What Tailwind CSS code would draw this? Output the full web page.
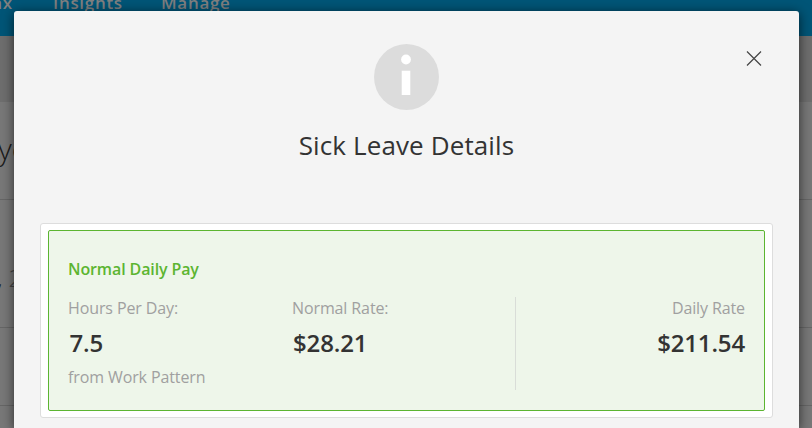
<!DOCTYPE html>
<html lang="en">
<head>
<meta charset="utf-8">
<title>Sick Leave Details</title>
<script src="https://cdn.jsdelivr.net/npm/@tailwindcss/browser@4"></script>
</head>
<body class="relative h-[428px] w-[812px] overflow-hidden bg-[#787878] font-['Open_Sans',sans-serif]">
  <div class="flex h-full flex-col">
    <nav class="flex h-9 shrink-0 bg-[#005577] text-[17px] leading-6 font-semibold tracking-[0.7px] whitespace-nowrap text-[#808080]">
      <span class="-mt-[9px] -ml-[18px] w-[71px]">Tax</span>
      <span class="-mt-[9px] w-[108px]">Insights</span>
      <span class="-mt-[9px]">Manage</span>
    </nav>
    <div class="h-[66px] shrink-0 bg-[#6e6e6e]"></div>
    <div class="h-[98px] shrink-0 border-b border-[#666] pt-[24px] text-[30px] leading-[46px] font-light whitespace-nowrap text-[#1a1a1a]"><span class="-ml-[2px]">ye</span></div>
    <div class="h-32 shrink-0 border-b border-[#666] pt-[61px] text-[24px] leading-[34px] whitespace-nowrap text-[#1a1a1a]"><span class="-ml-[4px] font-semibold">,</span><span class="ml-[6px] font-light text-[#444]">2</span></div>
    <div class="h-[78px] shrink-0 border-b border-[#666]"></div>
  </div>

  <section class="absolute top-[11px] left-[14px] flex h-[417px] w-[785px] flex-col rounded-t-[3px] bg-[#f4f4f4] px-[26px] pt-[33px] shadow-[0_2px_12px_rgba(0,0,0,0.65)]">
    <button class="absolute top-[40px] right-[37px]" aria-label="Close">
      <svg class="block" width="16" height="15" viewBox="0 0 16 15" fill="none" stroke="#444" stroke-width="1.2"><path d="M1 .5l14 14M15 .5l-14 14"/></svg>
    </button>
    <svg class="ml-[334px] block" width="65" height="66" viewBox="0 0 65 66"><ellipse cx="32.500" cy="33" rx="32.500" ry="33" fill="#dcdcdc"/><circle cx="32" cy="15.500" r="4.900" fill="#fff"/><path d="M27.700 26.700h8.600v24.300h-8.600z" fill="#fff"/></svg>
    <h1 class="mt-[17px] text-center text-[26px] leading-[36px] tracking-[0.12px] text-[#333]">Sick Leave Details</h1>
    <div class="mt-[60px] h-[195px] rounded-[3px] border border-[#ddd] bg-white px-[7px] py-[6px]">
      <div class="h-[181px] rounded-[2px] border border-[#5cb531] bg-[#eef6ea] px-[19px] pt-[26px]">
        <h2 class="text-[16px] leading-6 font-semibold tracking-[-0.12px] text-[#5cb531]">Normal Daily Pay</h2>
        <div class="mt-4 flex h-[93px] text-[16px] tracking-[-0.11px] text-[#a0a0a0]">
          <div class="w-[224px]">
            <p class="-mt-px leading-6">Hours Per Day:</p>
            <p class="mt-[5px] pl-[1.5px] text-[24px] leading-9 font-semibold tracking-[-0.15px] text-[#333]">7.5</p>
            <p class="mt-[4px] leading-6">from Work Pattern</p>
          </div>
          <div class="w-[224px] border-r border-[#d9ddd8]">
            <p class="-mt-px leading-6">Normal Rate:</p>
            <p class="mt-[5px] pl-px text-[24px] leading-9 font-semibold tracking-[-0.15px] text-[#333]">$28.21</p>
          </div>
          <div class="flex-1 text-right">
            <p class="-mt-px leading-6">Daily Rate</p>
            <p class="mt-[5px] text-[24px] leading-9 font-semibold tracking-[-0.15px] text-[#333]">$211.54</p>
          </div>
        </div>
      </div>
    </div>
  </section>
</body>
</html>
